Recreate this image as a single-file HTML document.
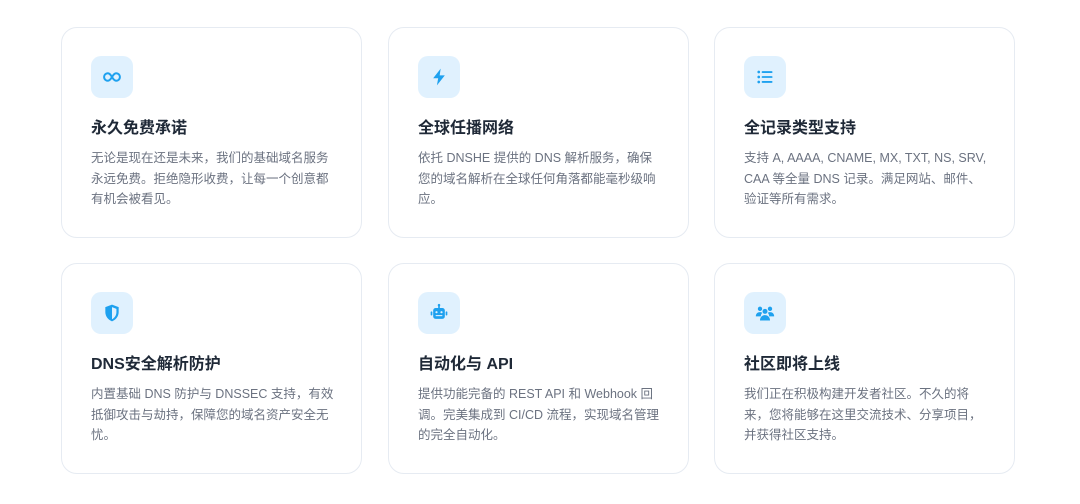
<!DOCTYPE html>
<html><head><meta charset="utf-8"><style>
*{margin:0;padding:0;box-sizing:border-box}
body{width:1080px;height:504px;background:#fff;font-family:"Liberation Sans","Noto Sans CJK SC",sans-serif;position:relative;overflow:hidden}
.card{position:absolute;width:301px;height:211px;border:1px solid #e6ebf2;border-radius:16px;background:#fff;padding:28px 29px}
.ic{width:42px;height:42px;border-radius:10px;background:#e0f1fe;display:flex;align-items:center;justify-content:center}
.ic svg{width:20px;height:20px;fill:#1ea1ef}
h3{margin-top:20px;font-size:16px;font-weight:700;color:#1f2937;line-height:22px}
p{margin-top:8px;font-size:12.5px;line-height:20.5px;color:#6b7280;width:245px}
</style></head><body>

<div class="card" style="left:61px;top:27px"><div class="ic"><svg viewBox="0 0 24 24"><path d="M7 7.5a4.5 4.5 0 1 0 0 9c2 0 3.3-1.6 5-4.5 1.7-2.9 3-4.5 5-4.5a4.5 4.5 0 1 1 0 9c-2 0-3.3-1.6-5-4.5C10.3 9.1 9 7.5 7 7.5z" fill="none" stroke="#1ea1ef" stroke-width="2.4"/></svg></div><h3>永久免费承诺</h3><p>无论是现在还是未来，我们的基础域名服务永远免费。拒绝隐形收费，让每一个创意都有机会被看见。</p></div>

<div class="card" style="left:388px;top:27px"><div class="ic"><svg viewBox="0 0 24 24"><path d="M14 2L5 13.5h6L9.5 22 19 10h-6.2z"/></svg></div><h3>全球任播网络</h3><p>依托 DNSHE 提供的 DNS 解析服务，确保您的域名解析在全球任何角落都能毫秒级响应。</p></div>

<div class="card" style="left:714px;top:27px"><div class="ic"><svg viewBox="0 0 24 24"><circle cx="4.5" cy="6" r="1.6"/><circle cx="4.5" cy="12" r="1.6"/><circle cx="4.5" cy="18" r="1.6"/><rect x="8" y="5" width="13" height="2.2" rx="1"/><rect x="8" y="10.9" width="13" height="2.2" rx="1"/><rect x="8" y="16.8" width="13" height="2.2" rx="1"/></svg></div><h3>全记录类型支持</h3><p>支持 A, AAAA, CNAME, MX, TXT, NS, SRV, CAA 等全量 DNS 记录。满足网站、邮件、验证等所有需求。</p></div>

<div class="card" style="left:61px;top:263px"><div class="ic"><svg viewBox="0 0 24 24"><path d="M12 2l8 3v6c0 5-3.4 9.4-8 11-4.6-1.6-8-6-8-11V5z"/><path d="M12 5v14.5c3-1.4 5.3-4.7 5.3-8.5V7z" fill="#e0f1fe"/></svg></div><h3>DNS安全解析防护</h3><p>内置基础 DNS 防护与 DNSSEC 支持，有效抵御攻击与劫持，保障您的域名资产安全无忧。</p></div>

<div class="card" style="left:388px;top:263px"><div class="ic"><svg viewBox="0 0 24 24"><rect x="11" y="2" width="2" height="4"/><circle cx="12" cy="2.5" r="1.5"/><rect x="5" y="6" width="14" height="13" rx="3"/><rect x="2" y="10" width="2" height="5" rx="1"/><rect x="20" y="10" width="2" height="5" rx="1"/><circle cx="9" cy="11" r="1.3" fill="#e0f1fe"/><circle cx="15" cy="11" r="1.3" fill="#e0f1fe"/><rect x="8" y="14.5" width="8" height="1.3" fill="#e0f1fe"/></svg></div><h3>自动化与 API</h3><p>提供功能完备的 REST API 和 Webhook 回调。完美集成到 CI/CD 流程，实现域名管理的完全自动化。</p></div>

<div class="card" style="left:714px;top:263px"><div class="ic"><svg viewBox="0 0 24 24"><circle cx="6" cy="7" r="2.6"/><circle cx="18" cy="7" r="2.6"/><circle cx="12" cy="10" r="3"/><path d="M1 16c0-3 2-5 5-5 1 0 2 .3 2.7.8C7.5 13 7 14.5 7 16z"/><path d="M23 16c0-3-2-5-5-5-1 0-2 .3-2.7.8 1.2 1.2 1.7 2.7 1.7 4.2z"/><path d="M6 21c0-4 2.5-6.5 6-6.5s6 2.5 6 6.5z"/></svg></div><h3>社区即将上线</h3><p>我们正在积极构建开发者社区。不久的将来，您将能够在这里交流技术、分享项目，并获得社区支持。</p></div>

</body></html>
